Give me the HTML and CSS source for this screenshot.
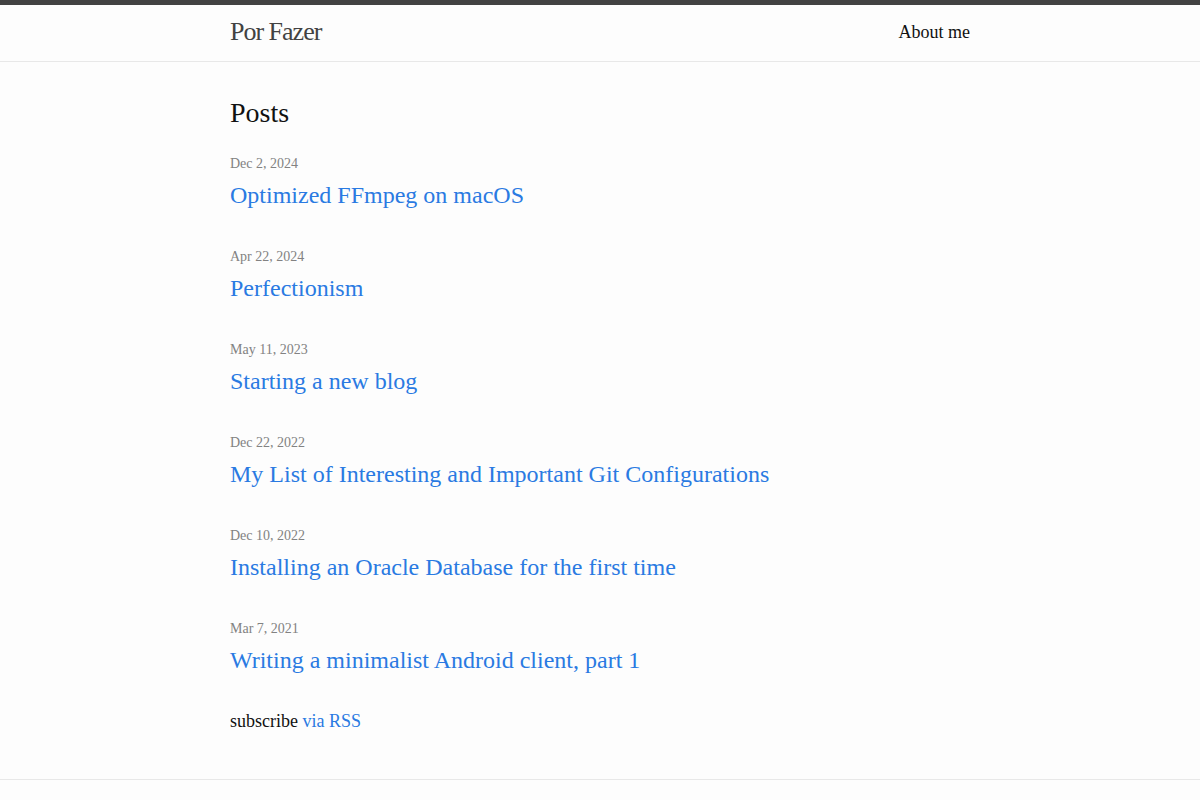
FILE: index.html
```html
<!DOCTYPE html>
<html lang="en">
<head>
<meta charset="utf-8">
<title>Por Fazer</title>
<link rel="stylesheet" href="styles.css">
</head>
<body>
<header class="site-header">
  <div class="wrapper header-row">
    <a class="site-title" href="#">Por Fazer</a>
    <nav class="site-nav">
      <a class="page-link" href="#">About me</a>
    </nav>
  </div>
</header>
<main class="page-content">
  <div class="wrapper">
    <h2 class="post-list-heading">Posts</h2>
    <ul class="post-list">
      <li>
        <span class="post-meta">Dec 2, 2024</span>
        <h3><a class="post-link" href="#">Optimized FFmpeg on macOS</a></h3>
      </li>
      <li>
        <span class="post-meta">Apr 22, 2024</span>
        <h3><a class="post-link" href="#">Perfectionism</a></h3>
      </li>
      <li>
        <span class="post-meta">May 11, 2023</span>
        <h3><a class="post-link" href="#">Starting a new blog</a></h3>
      </li>
      <li>
        <span class="post-meta">Dec 22, 2022</span>
        <h3><a class="post-link" href="#">My List of Interesting and Important Git Configurations</a></h3>
      </li>
      <li>
        <span class="post-meta">Dec 10, 2022</span>
        <h3><a class="post-link" href="#">Installing an Oracle Database for the first time</a></h3>
      </li>
      <li>
        <span class="post-meta">Mar 7, 2021</span>
        <h3><a class="post-link" href="#">Writing a minimalist Android client, part 1</a></h3>
      </li>
    </ul>
    <p class="rss-subscribe">subscribe <a href="#">via RSS</a></p>
  </div>
</main>
<footer class="site-footer">
  <div class="wrapper">
    <h2 class="footer-heading">Por Fazer</h2>
  </div>
</footer>
</body>
</html>
```
FILE: styles.css
```css
* { box-sizing: border-box; }
html, body { margin: 0; padding: 0; }
body {
  font-family: "Liberation Serif", "Times New Roman", serif;
  font-size: 18px;
  line-height: 27px;
  color: #111;
  background: #fdfdfd;
}
a { color: #2a7ae2; text-decoration: none; }
h2, h3, p, ul { margin: 0; padding: 0; font-weight: 400; }

.wrapper {
  max-width: 800px;
  margin: 0 auto;
  padding: 0 30px;
}

.site-header {
  border-top: 5px solid #424242;
  border-bottom: 1px solid #e8e8e8;
  min-height: 62px;
}
.header-row {
  display: flex;
  justify-content: space-between;
  align-items: flex-start;
}
.site-title {
  font-size: 26px;
  line-height: 54px;
  letter-spacing: -1px;
  color: #424242;
}
.site-nav { line-height: 54px; }
.page-link { color: #111; font-size: 18px; }

.page-content { padding: 30px 0; }
.post-list-heading {
  font-size: 28px;
  line-height: 42px;
  margin-bottom: 17px;
}
.post-list { list-style: none; }
.post-list li { margin-bottom: 31px; }
.post-meta {
  display: block;
  font-size: 14px;
  line-height: 26px;
  color: #828282;
}
.post-list h3 { font-size: 24px; line-height: 36px; }
.post-link { display: block; }

.rss-subscribe { margin-bottom: 16px; line-height: 24px; }

.site-footer {
  border-top: 1px solid #e8e8e8;
  padding: 40px 0 30px;
}
.footer-heading { font-size: 18px; margin-bottom: 15px; }
```
